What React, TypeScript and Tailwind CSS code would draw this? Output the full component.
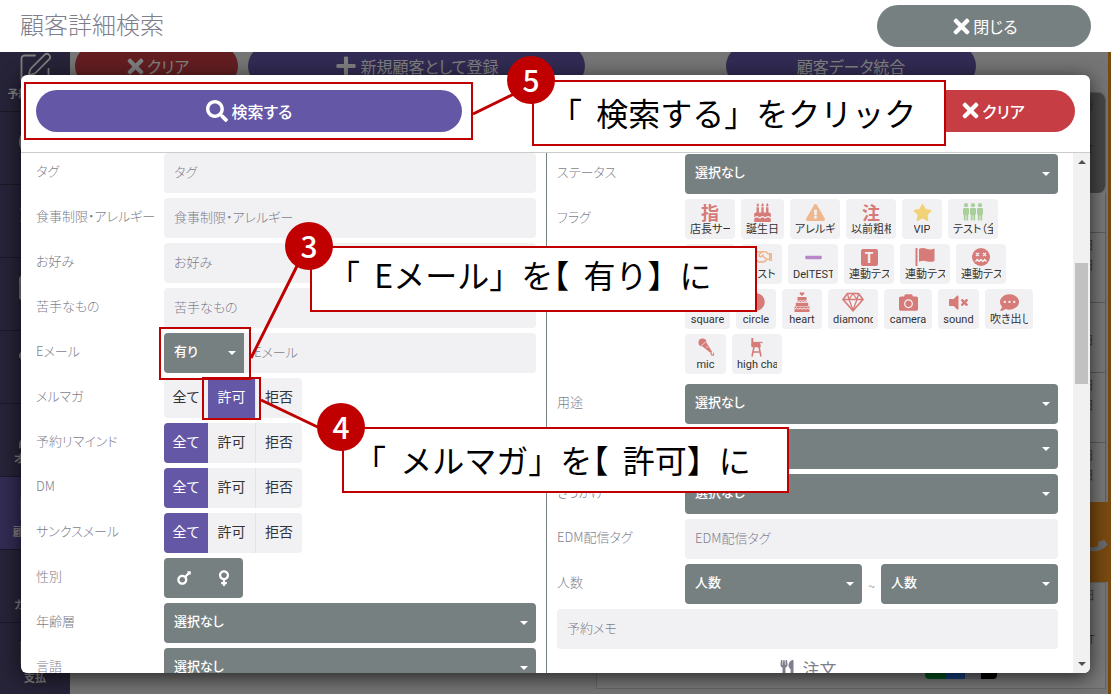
import { useState, type ReactNode } from "react";
import {
  FaBirthdayCake,
  FaCamera,
  FaCircle,
  FaCommentDots,
  FaExclamationTriangle,
  FaMars,
  FaMinus,
  FaPhone,
  FaPlus,
  FaRegHandshake,
  FaSearch,
  FaSquare,
  FaStar,
  FaTimes,
  FaUtensils,
  FaVenus,
  FaVolumeMute,
} from "react-icons/fa";
import { Calendar, Clock, Mail, Settings, SquarePen, Store, Users, Wallet } from "lucide-react";

const navItems = [
  { label: "予約一覧表", icon: SquarePen },
  { label: "", icon: Clock },
  { label: "", icon: Settings },
  { label: "", icon: Mail },
  { label: "", icon: Store },
  { label: "オーダー", icon: Users },
  { label: "顧客管理", icon: Calendar, active: true },
  { label: "カレンダ", icon: undefined },
  { label: "支払", icon: Wallet },
];

const historyRows = [
  { cells: ["日", "T"], style: "h-[101px] justify-between rounded-r-lg border-t bg-[#8c8c8c] pb-9" },
  { cells: [], style: "h-[39px] bg-[#f2f2f2]" },
  { cells: ["日", "日"], style: "h-[70px] border-t bg-[#f2f2f2]" },
  { cells: ["日"], style: "h-[70px] justify-center border-t bg-[#f2f2f2]" },
  { cells: ["日", "日"], style: "h-[70px] border-t bg-[#f2f2f2]" },
  { cells: ["日", "日"], style: "h-[60px] border-t bg-[#f2f2f2]" },
];

function PeopleIcon() {
  return (
    <svg viewBox="0 0 20 18" className="h-[18px] w-5" fill="currentColor">
      {[0, 7, 14].map((x) => (
        <g key={x} transform={`translate(${x} 0)`}>
          <circle cx="3" cy="2.2" r="2.1" />
          <path d="M1 5h4a1 1 0 0 1 1 1v5.500H5.200V17.500H3.400v-5h-.8v5H.8v-6H0V6a1 1 0 0 1 1-1z" />
        </g>
      ))}
    </svg>
  );
}

function FlagIcon() {
  return (
    <svg viewBox="0 0 20 18" className="h-[18px] w-5" fill="currentColor">
      <rect x="0.500" y="0" width="2" height="18" />
      <path d="M4 1c3-1.500 5-.8 8 0 2.500.7 5 .5 7.500-.5V13c-3 1.200-5.500 1-8 .2C9 12.400 6.500 12.500 4 13.800z" />
    </svg>
  );
}

function DizzyIcon() {
  return (
    <svg viewBox="0 0 18 18" className="h-[18px] w-[18px]">
      <circle cx="9" cy="9" r="9" fill="currentColor" />
      <path
        d="M4 5l3 3M7 5L4 8M11 5l3 3M14 5l-3 3M3.500 13.500l1.800-2 1.900 2 1.800-2 1.800 2 1.900-2 1.800 2"
        fill="none"
        stroke="#f1f1f4"
        strokeWidth="1.300"
      />
    </svg>
  );
}

function TierCakeIcon() {
  return (
    <svg viewBox="0 0 18 20" className="h-5 w-[18px]">
      <g fill="currentColor">
        <path d="M9 4L6.800 1.900A1.200 1.200 0 0 1 9 .9a1.200 1.200 0 0 1 2.200 1z" />
        <path d="M4.500 5h9v5h-9z" />
        <path d="M2.800 10.800h12.400v3.200H2.800z" />
        <path d="M1.500 14.500h15V20h-15z" />
      </g>
      <path
        d="M4.500 8.500l1.500 1 1.500-1 1.500 1 1.500-1 1.500 1 1.500-1M1.500 17.300l1.900-1.300 1.900 1.300L7.100 16 9 17.300l1.900-1.300 1.900 1.300 1.800-1.300 1.900 1.300"
        fill="none"
        stroke="#f1f1f4"
        strokeWidth="1"
      />
    </svg>
  );
}

function DiamondIcon() {
  return (
    <svg viewBox="0 0 22 20" className="h-5 w-[22px]" fill="none" stroke="currentColor" strokeLinejoin="round">
      <path d="M5.500 1.500h11L21 7.500 11 18.800 1 7.500z" strokeWidth="1.700" />
      <path d="M1 7.500h20M7 7.500L11 18l4-10.500M5.500 1.500L7 7.500l4-6 4 6 1.500-6" strokeWidth="1.300" />
    </svg>
  );
}

function MicIcon() {
  return (
    <svg viewBox="0 0 18 20" className="h-5 w-[18px]">
      <path d="M5.500 9.500L9.500 5.800 15 14.500l-1.700 1.300z" fill="currentColor" />
      <circle cx="5.500" cy="5.500" r="4" fill="currentColor" />
      <path d="M3.500 9.300l5.700-4.600" stroke="#f1f1f4" strokeWidth=".7" />
      <circle cx="10" cy="10" r=".7" fill="#f1f1f4" />
      <path d="M14 15c0 2 .3 3.300 1.500 3.300s1.500-1.300.8-2.600" fill="none" stroke="currentColor" strokeWidth="1.100" />
    </svg>
  );
}

function HighChairIcon() {
  return (
    <svg viewBox="0 0 16 20" className="h-5 w-4" fill="none" stroke="currentColor">
      <path d="M3.300 1v8" strokeWidth="2" />
      <path d="M2.500 8.800h9.200" strokeWidth="3" />
      <path d="M4 5.500h9.500" strokeWidth="1.300" />
      <path d="M4 6h7v3H4z" fill="currentColor" stroke="none" />
      <path d="M5 10L3 19.500M10 10l2 9.500M4.500 15h6.300" strokeWidth="1.600" />
    </svg>
  );
}

const red = "text-[#d77b79]";
const orange = "text-[#eeb78d]";

type Flag = { label: string; width: string; color: string; icon: ReactNode };

const flagRows: Flag[][] = [
  [
    { label: "店長サービス", width: "w-[50px]", color: red, icon: <span className="text-lg font-bold">指</span> },
    { label: "誕生日", width: "w-[43px]", color: red, icon: <FaBirthdayCake size={19} /> },
    { label: "アレルギー", width: "w-[50px]", color: orange, icon: <FaExclamationTriangle size={19} /> },
    { label: "以前粗相", width: "w-[50px]", color: red, icon: <span className="text-lg font-bold">注</span> },
    { label: "VIP", width: "w-10", color: "text-[#f1d277]", icon: <FaStar size={19} /> },
    { label: "テスト（全）", width: "w-[50px]", color: "text-[#a9cf9b]", icon: <PeopleIcon /> },
  ],
  [
    { label: "テスト", width: "w-[50px]", color: red, icon: <FaSquare size={18} /> },
    { label: "テスト", width: "w-[41px]", color: orange, icon: <FaRegHandshake size={20} /> },
    { label: "DelTEST", width: "w-[50px]", color: "text-[#b587c9]", icon: <FaMinus size={19} /> },
    {
      label: "連動テスト",
      width: "w-[50px]",
      color: red,
      icon: (
        <span className="flex h-[17px] w-[17px] items-center justify-center rounded-xs bg-[#d77b79] text-sm font-bold text-[#f1f1f4]">
          T
        </span>
      ),
    },
    { label: "連動テスト", width: "w-[50px]", color: red, icon: <FlagIcon /> },
    { label: "連動テスト", width: "w-[50px]", color: red, icon: <DizzyIcon /> },
  ],
  [
    { label: "square", width: "w-[45px]", color: red, icon: <FaSquare size={18} /> },
    { label: "circle", width: "w-10", color: red, icon: <FaCircle size={18} /> },
    { label: "heart", width: "w-10", color: red, icon: <TierCakeIcon /> },
    { label: "diamond", width: "w-[50px]", color: red, icon: <DiamondIcon /> },
    { label: "camera", width: "w-12", color: red, icon: <FaCamera size={19} /> },
    { label: "sound", width: "w-[41px]", color: red, icon: <FaVolumeMute size={19} /> },
    { label: "吹き出し", width: "w-12", color: red, icon: <FaCommentDots size={19} /> },
  ],
  [
    { label: "mic", width: "w-[41px]", color: red, icon: <MicIcon /> },
    { label: "high chair", width: "w-[50px]", color: red, icon: <HighChairIcon /> },
  ],
];

function Row({ label, id, children }: { label: string; id?: string; children: ReactNode }) {
  return (
    <div className="flex">
      <label htmlFor={id} className="flex h-10 w-32 shrink-0 items-center pb-1 whitespace-nowrap">
        {label}
      </label>
      <div className="flex min-w-0 flex-1">{children}</div>
    </div>
  );
}

function TextInput({ id, label, className = "rounded" }: { id: string; label: string; className?: string }) {
  return (
    <input
      id={id}
      type="text"
      aria-label={label}
      placeholder={label}
      className={`h-10 w-full min-w-0 bg-[#f1f1f4] px-2.5 pb-1 placeholder:text-[#7e7e8c] ${className}`}
    />
  );
}

type SelectProps = { id: string; value?: string; label?: string; className?: string };

function Select({ id, value = "選択なし", label, className = "w-full rounded" }: SelectProps) {
  return (
    <div className={`relative h-10 shrink-0 overflow-hidden bg-[#778081] text-white ${className}`}>
      <select id={id} aria-label={label} className="h-10 w-full appearance-none px-2.5 pb-1 font-medium">
        <option>{value}</option>
      </select>
      <svg viewBox="0 0 8 4" className="pointer-events-none absolute top-[18px] right-2 h-1 w-2" fill="currentColor">
        <path d="M0 0h8L4 4z" />
      </svg>
    </div>
  );
}

function Segmented({ initial = 0 }: { initial?: number }) {
  const [selected, setSelected] = useState(initial);
  return (
    <div className="flex overflow-hidden rounded bg-[#f1f1f4] text-sm font-normal text-[#333]">
      {["全て", "許可", "拒否"].map((text, i) => (
        <button
          key={text}
          type="button"
          aria-pressed={selected === i}
          onClick={() => setSelected(i)}
          className={`h-10 pb-1 ${i === 0 ? "w-11" : "w-[47px]"} ${i === 2 ? "border-l border-[#e4e4e8]" : ""} ${
            selected === i ? "bg-[#6457a6] text-white" : ""
          }`}
        >
          {text}
        </button>
      ))}
    </div>
  );
}

function Callout({ step, className, children }: { step: number; className: string; children: ReactNode }) {
  return (
    <div className={`absolute h-[66px] border-2 border-[#c00000] bg-white ${className}`}>
      <p className="text-[32px] whitespace-pre text-black">{children}</p>
      <span className="absolute -top-[26px] -left-[27px] flex h-12 w-12 items-center justify-center rounded-full bg-[#c00000] pb-0.5 text-[30px] leading-none font-medium text-white">
        {step}
      </span>
    </div>
  );
}

function HalfBracket() {
  return <span className="[font-feature-settings:'halt']">【</span>;
}

/* Reservation screen that stays dimmed under the dialog */
function Background() {
  return (
    <div className="absolute inset-0 flex overflow-hidden bg-[#ebebeb] text-base text-white">
      <nav className="-mt-[13px] w-[70px] shrink-0 bg-[#4e4670]">
        {navItems.map(({ label, icon: Icon, active }, i) => (
          <a
            key={i}
            href="#"
            className={`flex h-[73px] flex-col items-center overflow-hidden border-b border-[#38324f] pt-3 text-[11px] leading-4 font-bold whitespace-nowrap ${
              active ? "bg-[#6457a6]" : ""
            }`}
          >
            <span className="h-[34px]">{Icon && <Icon size={36} strokeWidth={1.2} />}</span>
            <span>{label}</span>
          </a>
        ))}
      </nav>
      <div className="flex min-w-0 flex-1 flex-col">
        <div className="-mt-[7px] flex h-[42px] shrink-0 gap-2.5 px-[5px]">
          <button className="flex w-[163px] items-center justify-center rounded-full bg-[#c63d43]">
            <FaTimes size={23} />
            クリア
          </button>
          <button className="flex w-[337px] items-center justify-center gap-1 rounded-full bg-[#6457a6]">
            <FaPlus size={22} />
            新規顧客として登録
          </button>
          <button className="mr-[127px] ml-auto w-[250px] rounded-full bg-[#6457a6]">顧客データ統合</button>
        </div>
        <div className="mt-[5px] mr-0.5 ml-auto w-[510px] text-right text-xs font-light text-[#555]">
          {historyRows.map(({ cells, style }, i) => (
            <div key={i} className={`flex flex-col gap-1 border-r border-[#bbb] pt-1 pr-[11px] ${style}`}>
              {cells.map((c, j) => (
                <span key={j}>{c}</span>
              ))}
            </div>
          ))}
          <div className="-mr-0.5 flex h-20 items-center justify-end bg-[#f39521] pt-1 pr-1 text-gray-300">
            <FaPhone size={22} className="rotate-45" />
          </div>
          <div className="flex h-[107px] flex-col border border-[#ccc] bg-[#f2f2f2] pt-1 pr-2.5">
            <span>日</span>
            <span className="mt-7">T</span>
            <span className="mt-3 mr-[98px] ml-auto flex h-5 w-[72px] overflow-hidden rounded">
              <i className="w-5 bg-green-600" />
              <i className="w-5 bg-blue-500" />
              <i className="w-4 bg-gray-300" />
              <i className="w-4 bg-black" />
            </span>
          </div>
        </div>
      </div>
      <div className="w-[3px] bg-[#f39521]" />
      <div className="absolute inset-0 bg-black/50" />
    </div>
  );
}

export default function App() {
  return (
    <div className="relative flex h-screen flex-col overflow-hidden bg-white font-['Noto_Sans_CJK_JP',sans-serif]">
      <header className="flex h-[52px] shrink-0 items-center justify-between px-5 [font-feature-settings:'palt']">
        <h1 className="pb-1 text-2xl font-light text-[#7e7e8c]">顧客詳細検索</h1>
        <button className="flex h-[42px] w-[214px] items-center justify-center rounded-full bg-[#778081] text-base text-white">
          <FaTimes size={23} />
          閉じる
        </button>
      </header>

      <main className="relative flex-1 [font-feature-settings:'palt']">
        <Background />

        <section className="absolute inset-x-[21px] top-[23px] bottom-[21px] flex flex-col overflow-hidden rounded-md bg-white shadow-[0_4px_20px_rgba(0,0,0,0.7)]">
          <div className="flex h-[78px] shrink-0 items-center justify-between border-b border-[#ccc] px-[15px] pb-1.5 text-base font-medium text-white">
            <button className="flex h-[42px] w-[41%] items-center justify-center gap-1 rounded-full bg-[#6457a6]">
              <FaSearch size={22} />
              検索する
            </button>
            <button className="flex h-[42px] w-[166px] items-center justify-center rounded-full bg-[#c63d43]">
              <FaTimes size={23} />
              クリア
            </button>
          </div>

          <div className="flex min-h-0 flex-1 text-[13px] font-light text-[#7e7e8c]">
            <form className="grid min-w-0 flex-1 grid-cols-2">
              <div className="flex flex-col gap-[5px] border-r border-[#778081] pr-2.5 pl-[15px]">
                <Row label="タグ" id="tag">
                  <TextInput id="tag" label="タグ" />
                </Row>
                <Row label="食事制限・アレルギー" id="allergy">
                  <TextInput id="allergy" label="食事制限・アレルギー" />
                </Row>
                <Row label="お好み" id="likes">
                  <TextInput id="likes" label="お好み" />
                </Row>
                <Row label="苦手なもの" id="dislikes">
                  <TextInput id="dislikes" label="苦手なもの" />
                </Row>
                <Row label="Eメール" id="email">
                  <Select id="has-email" label="Eメールの有無" value="有り" className="w-20 rounded-l" />
                  <TextInput id="email" label="Eメール" className="rounded-r" />
                </Row>
                <Row label="メルマガ">
                  <Segmented initial={1} />
                </Row>
                <Row label="予約リマインド">
                  <Segmented />
                </Row>
                <Row label="DM">
                  <Segmented />
                </Row>
                <Row label="サンクスメール">
                  <Segmented />
                </Row>
                <Row label="性別">
                  <div className="flex rounded bg-[#778081] text-white">
                    <button type="button" aria-label="男性" className="flex h-10 w-10 items-center justify-center">
                      <FaMars size={18} />
                    </button>
                    <button type="button" aria-label="女性" className="flex h-10 w-[39px] items-center justify-center">
                      <FaVenus size={18} />
                    </button>
                  </div>
                </Row>
                <Row label="年齢層" id="age">
                  <Select id="age" />
                </Row>
                <Row label="言語" id="language">
                  <Select id="language" />
                </Row>
              </div>

              <div className="flex flex-col gap-[5px] pt-px pr-[15px] pl-2.5">
                <Row label="ステータス" id="status">
                  <Select id="status" />
                </Row>
                <Row label="フラグ">
                  <div className="mb-[5px] flex flex-col gap-[5px]">
                    {flagRows.map((flags, i) => (
                      <div key={i} className="flex gap-1.5">
                        {flags.map((flag, j) => (
                          <button
                            key={j}
                            type="button"
                            className={`flex h-10 flex-col items-center rounded bg-[#f1f1f4] px-[5px] pt-[3px] ${flag.width}`}
                          >
                            <span className={`flex h-5 items-center leading-5 ${flag.color}`}>{flag.icon}</span>
                            <span className="max-w-full overflow-hidden font-['Roboto','Noto_Sans_CJK_JP',sans-serif] text-[11px] leading-4 font-normal whitespace-nowrap text-[#333]">
                              {flag.label}
                            </span>
                          </button>
                        ))}
                      </div>
                    ))}
                  </div>
                </Row>
                <Row label="用途" id="purpose">
                  <Select id="purpose" />
                </Row>
                <Row label="媒体" id="media">
                  <Select id="media" />
                </Row>
                <Row label="きっかけ" id="trigger">
                  <Select id="trigger" />
                </Row>
                <Row label="EDM配信タグ" id="edm">
                  <TextInput id="edm" label="EDM配信タグ" />
                </Row>
                <Row label="人数" id="min">
                  <Select id="min" value="人数" className="flex-1 rounded" />
                  <span className="w-[19px] pt-3 text-center">~</span>
                  <Select id="max" label="人数（上限）" value="人数" className="flex-1 rounded" />
                </Row>
                <TextInput id="memo" label="予約メモ" />
                <h2 className="flex items-start justify-center gap-2 pt-0.5 text-[17px] font-normal">
                  <FaUtensils size={16} className="mt-1" />
                  注文
                </h2>
              </div>
            </form>

            <div className="flex w-[17px] shrink-0 flex-col items-center justify-between bg-[#f1f1f1] py-[7px] text-[#505050]">
              <svg viewBox="0 0 8 4" className="h-1 w-2" fill="currentColor">
                <path d="M0 4h8L4 0z" />
              </svg>
              <div className="flex w-[13px] flex-1 flex-col pt-[99px]">
                <div className="h-[121px] bg-[#c1c1c1]" />
              </div>
              <svg viewBox="0 0 8 4" className="h-1 w-2" fill="currentColor">
                <path d="M0 0h8L4 4z" />
              </svg>
            </div>
          </div>
        </section>
      </main>

      {/* Step markers over the screen */}
      <div className="pointer-events-none absolute inset-0">
        <div className="absolute top-[82px] left-6 h-[58px] w-[449px] border-2 border-[#c00000]" />
        <div className="absolute top-[327px] left-[159px] h-[53px] w-[92px] border-2 border-[#c00000]" />
        <div className="absolute top-[377px] left-[202px] h-[43px] w-[59px] border-2 border-[#c00000]" />
        <svg className="absolute inset-0 h-full w-full" stroke="#c00000" strokeWidth="3">
          <path d="M473 114L520 91M251 358L300 260M261 400L326 431" />
        </svg>
        <Callout step={3} className="top-[246px] left-[310px] w-[447px] pl-4 leading-[52px]">
          「{"  "}Eメール」を
          <HalfBracket />
          {"  "}有り】に
        </Callout>
        <Callout step={4} className="top-[427px] left-[342px] w-[447px] pl-2.5 leading-[60px]">
          「{"  "}メルマガ」を
          <HalfBracket />
          {"  "}許可】に
        </Callout>
        <Callout step={5} className="top-20 left-[532px] w-[414px] pl-4 leading-[60px]">
          「{"  "}検索する」をクリック
        </Callout>
      </div>
    </div>
  );
}
